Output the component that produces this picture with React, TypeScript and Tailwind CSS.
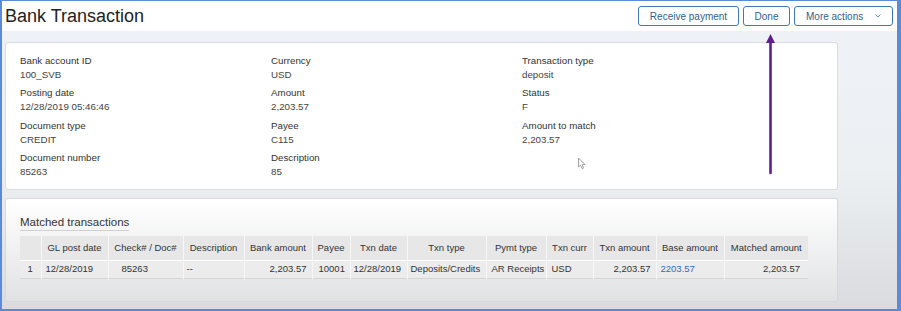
const font = { fontFamily: '"Liberation Sans", Arial, sans-serif' }

interface Field {
  label: string
  value: string
}

const fieldRows: (Field | null)[][] = [
  [
    { label: 'Bank account ID', value: '100_SVB' },
    { label: 'Currency', value: 'USD' },
    { label: 'Transaction type', value: 'deposit' },
  ],
  [
    { label: 'Posting date', value: '12/28/2019 05:46:46' },
    { label: 'Amount', value: '2,203.57' },
    { label: 'Status', value: 'F' },
  ],
  [
    { label: 'Document type', value: 'CREDIT' },
    { label: 'Payee', value: 'C115' },
    { label: 'Amount to match', value: '2,203.57' },
  ],
  [
    { label: 'Document number', value: '85263' },
    { label: 'Description', value: '85' },
    null,
  ],
]

interface Column {
  title: string
  width: number
  value: string
  cellClass: string
  link?: boolean
}

const columns: Column[] = [
  { title: '', width: 21, value: '1', cellClass: 'text-center' },
  { title: 'GL post date', width: 67, value: '12/28/2019', cellClass: 'pl-[4px]' },
  { title: 'Check# / Doc#', width: 75, value: '85263', cellClass: 'pl-[13px]' },
  { title: 'Description', width: 61, value: '--', cellClass: 'pl-[3px]' },
  { title: 'Bank amount', width: 68, value: '2,203.57', cellClass: 'pr-[5px] text-right' },
  { title: 'Payee', width: 38, value: '10001', cellClass: 'pl-[6px]' },
  { title: 'Txn date', width: 57, value: '12/28/2019', cellClass: 'pl-[3px]' },
  { title: 'Txn type', width: 79, value: 'Deposits/Credits', cellClass: 'pl-[3px]' },
  { title: 'Pymt type', width: 60, value: 'AR Receipts', cellClass: 'pl-[5px]' },
  { title: 'Txn curr', width: 47, value: 'USD', cellClass: 'pl-[5px]' },
  { title: 'Txn amount', width: 63, value: '2,203.57', cellClass: 'pr-[5px] text-right' },
  { title: 'Base amount', width: 68, value: '2203.57', cellClass: 'pl-[4px]', link: true },
  { title: 'Matched amount', width: 84, value: '2,203.57', cellClass: 'pr-[8px] text-right' },
]

const HeaderButton: React.FC<{ width: string; children: React.ReactNode }> = ({
  width,
  children,
}) => {
  return (
    <button
      type="button"
      className={`flex h-[20px] ${width} items-center justify-center rounded-[3px] border-[1.5px] border-[#3b7cb8] bg-white text-[10px] text-[#2f5f8f]`}
    >
      {children}
    </button>
  )
}

const App: React.FC = () => {
  return (
    <div
      style={font}
      className="relative box-border h-[311px] w-[901px] overflow-hidden border-t border-r-[4px] border-b-2 border-l-2 border-[#5b8bd8]"
    >
      <header className="flex h-[30px] items-center justify-between bg-white pl-[3px] pr-[4px]">
        <h1 className="text-[18px] leading-none text-[#222]">Bank Transaction</h1>
        <div className="flex items-center gap-[4px]">
          <HeaderButton width="w-[101px]">Receive payment</HeaderButton>
          <HeaderButton width="w-[47px]">Done</HeaderButton>
          <HeaderButton width="w-[99px]">
            <span className="flex w-full items-center justify-between pl-[11px] pr-[11px]">
              More actions
              <svg width="6" height="4" viewBox="0 0 6 4" fill="none">
                <path d="M0.5 0.5 3 3 5.5 0.5" stroke="#5a7fa8" strokeWidth="0.9" />
              </svg>
            </span>
          </HeaderButton>
        </div>
      </header>

      <main className="flex h-[278px] flex-col gap-[8px] bg-gradient-to-b from-[#eef1f5] via-[#edf0f3] to-[#d9dbde] pl-[3px] pt-[11px]">
        <section className="w-[833px] rounded-[3px] border border-[#dadcdf] bg-white pb-[10px] pl-[14px] pt-[11px]">
          <div className="grid grid-cols-[251px_251px_251px] gap-y-[4.4px]">
            {fieldRows.flat().map((field, index) =>
              field ? (
                <div key={field.label}>
                  <div className="text-[9.75px] leading-[14px] text-[#333]">{field.label}</div>
                  <div className="text-[9.75px] leading-[14px] text-[#444]">{field.value}</div>
                </div>
              ) : (
                <div key={`empty-${index}`} />
              ),
            )}
          </div>
        </section>

        <section className="h-[104px] w-[833px] rounded-[3px] border border-[#d6d8db] bg-gradient-to-b from-white to-[#e1e2e4] pl-[14px] pt-[17px]">
          <h2 className="w-fit border-b border-[#cfd1d4] pb-[1px] text-[11.5px] leading-[13px] text-[#333]">
            Matched transactions
          </h2>
          <table className="mt-[5px] table-fixed border-collapse text-[9.5px] text-[#333]">
            <colgroup>
              {columns.map((column) => (
                <col key={column.title || 'index'} style={{ width: column.width }} />
              ))}
            </colgroup>
            <thead>
              <tr className="h-[24px] bg-[#e7e7e8]">
                {columns.map((column, index) => (
                  <th
                    key={column.title || 'index'}
                    className={`whitespace-nowrap text-center font-normal ${
                      index > 0 ? 'border-l border-[#f7f7f7]' : ''
                    }`}
                  >
                    {column.title}
                  </th>
                ))}
              </tr>
            </thead>
            <tbody>
              <tr className="h-[18px] border-t border-b border-t-white border-b-[#d3d4d6] bg-[#ececed]">
                {columns.map((column, index) => (
                  <td
                    key={column.title || 'index'}
                    className={`whitespace-nowrap ${column.cellClass} ${
                      column.link ? 'text-[#2a6fb2]' : ''
                    } ${index > 0 ? 'border-l border-[#f7f7f7]' : ''}`}
                  >
                    {column.value}
                  </td>
                ))}
              </tr>
            </tbody>
          </table>
        </section>
      </main>

      <svg
        className="pointer-events-none absolute left-[761px] top-[31px]"
        width="16"
        height="144"
        viewBox="0 0 16 144"
      >
        <path d="M7.5 8 V141" stroke="#5e1f91" strokeWidth="2.6" strokeLinecap="round" />
        <path d="M7.5 2 L3 11 L12 11 Z" fill="#5e1f91" />
      </svg>

      <svg
        className="pointer-events-none absolute left-[575px] top-[156px]"
        width="10"
        height="13"
        viewBox="0 0 10 13"
      >
        <path
          d="M1.5 1 V10 L3.6 8.2 L5.2 11.6 L6.6 11 L5.1 7.7 L8 7.5 Z"
          fill="white"
          stroke="#8a8a8a"
          strokeWidth="0.8"
          strokeLinejoin="round"
        />
      </svg>
    </div>
  )
}

export default App
